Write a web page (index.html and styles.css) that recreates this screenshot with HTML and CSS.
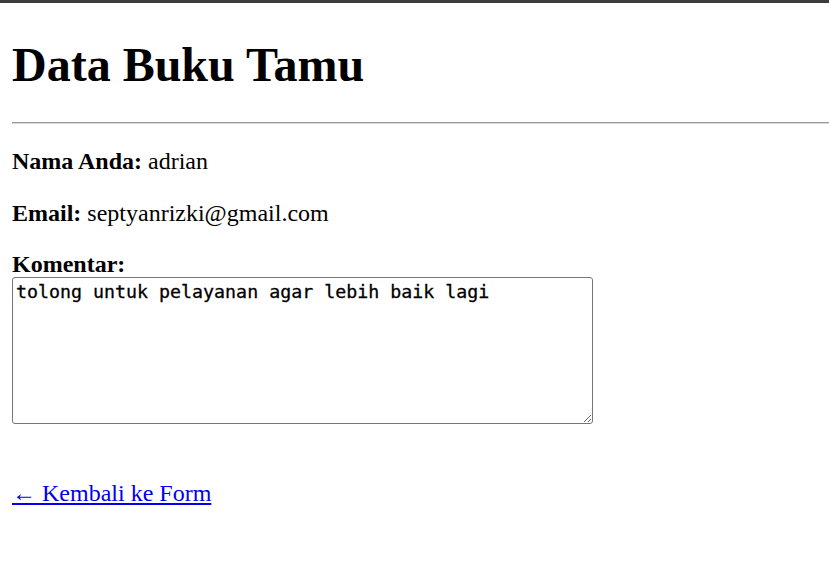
FILE: index.html
```html
<!DOCTYPE html>
<html lang="id">
<head>
<meta charset="utf-8">
<title>Data Buku Tamu</title>
<link rel="stylesheet" href="styles.css">
</head>
<body>
<div class="topbar"></div>
<main class="page">
  <h1 class="title">Data Buku Tamu</h1>
  <hr class="rule">
  <p class="field"><strong>Nama Anda:</strong> adrian</p>
  <p class="field"><strong>Email:</strong> septyanrizki@gmail.com</p>
  <div class="field">
    <strong class="label">Komentar:</strong>
    <textarea class="comment" readonly>tolong untuk pelayanan agar lebih baik lagi</textarea>
  </div>
  <p class="back"><a class="back-link" href="#">← Kembali ke Form</a></p>
</main>
</body>
</html>
```
FILE: styles.css
```css
html, body {
  margin: 0;
  padding: 0;
  background: #ffffff;
}
body {
  font-family: "Liberation Serif", "Times New Roman", serif;
  font-size: 24px;
  color: #000;
  overflow: hidden;
}
.topbar {
  height: 3px;
  background: #3c3c3c;
}
.page {
  padding: 0 0 0 12px;
}
.title {
  font-size: 48px;
  font-weight: bold;
  line-height: 55px;
  margin: 34px 0 0;
}
.rule {
  margin: 30px 0 0;
  height: 0;
  border: 0;
  border-top: 1px solid #9a9a9a;
  border-bottom: 1px solid #d8d8d8;
}
.field {
  margin: 24px 0 0;
  line-height: 27.6px;
}
.label {
  display: block;
  line-height: 26px;
}
.comment {
  display: block;
  box-sizing: border-box;
  width: 581px;
  height: 147px;
  margin: 0;
  padding: 3px 3px;
  border: 1px solid #767676;
  border-radius: 3px;
  font-family: "DejaVu Sans Mono", monospace;
  font-size: 18.3px;
  line-height: 21px;
  color: #000;
  background: #fff;
  resize: both;
  outline: none;
  -webkit-text-stroke: 0.3px #000;
}
.back {
  margin: 56px 0 0;
  line-height: 27.6px;
}
.back-link {
  color: #0000ee;
  text-decoration: underline;
}
```
